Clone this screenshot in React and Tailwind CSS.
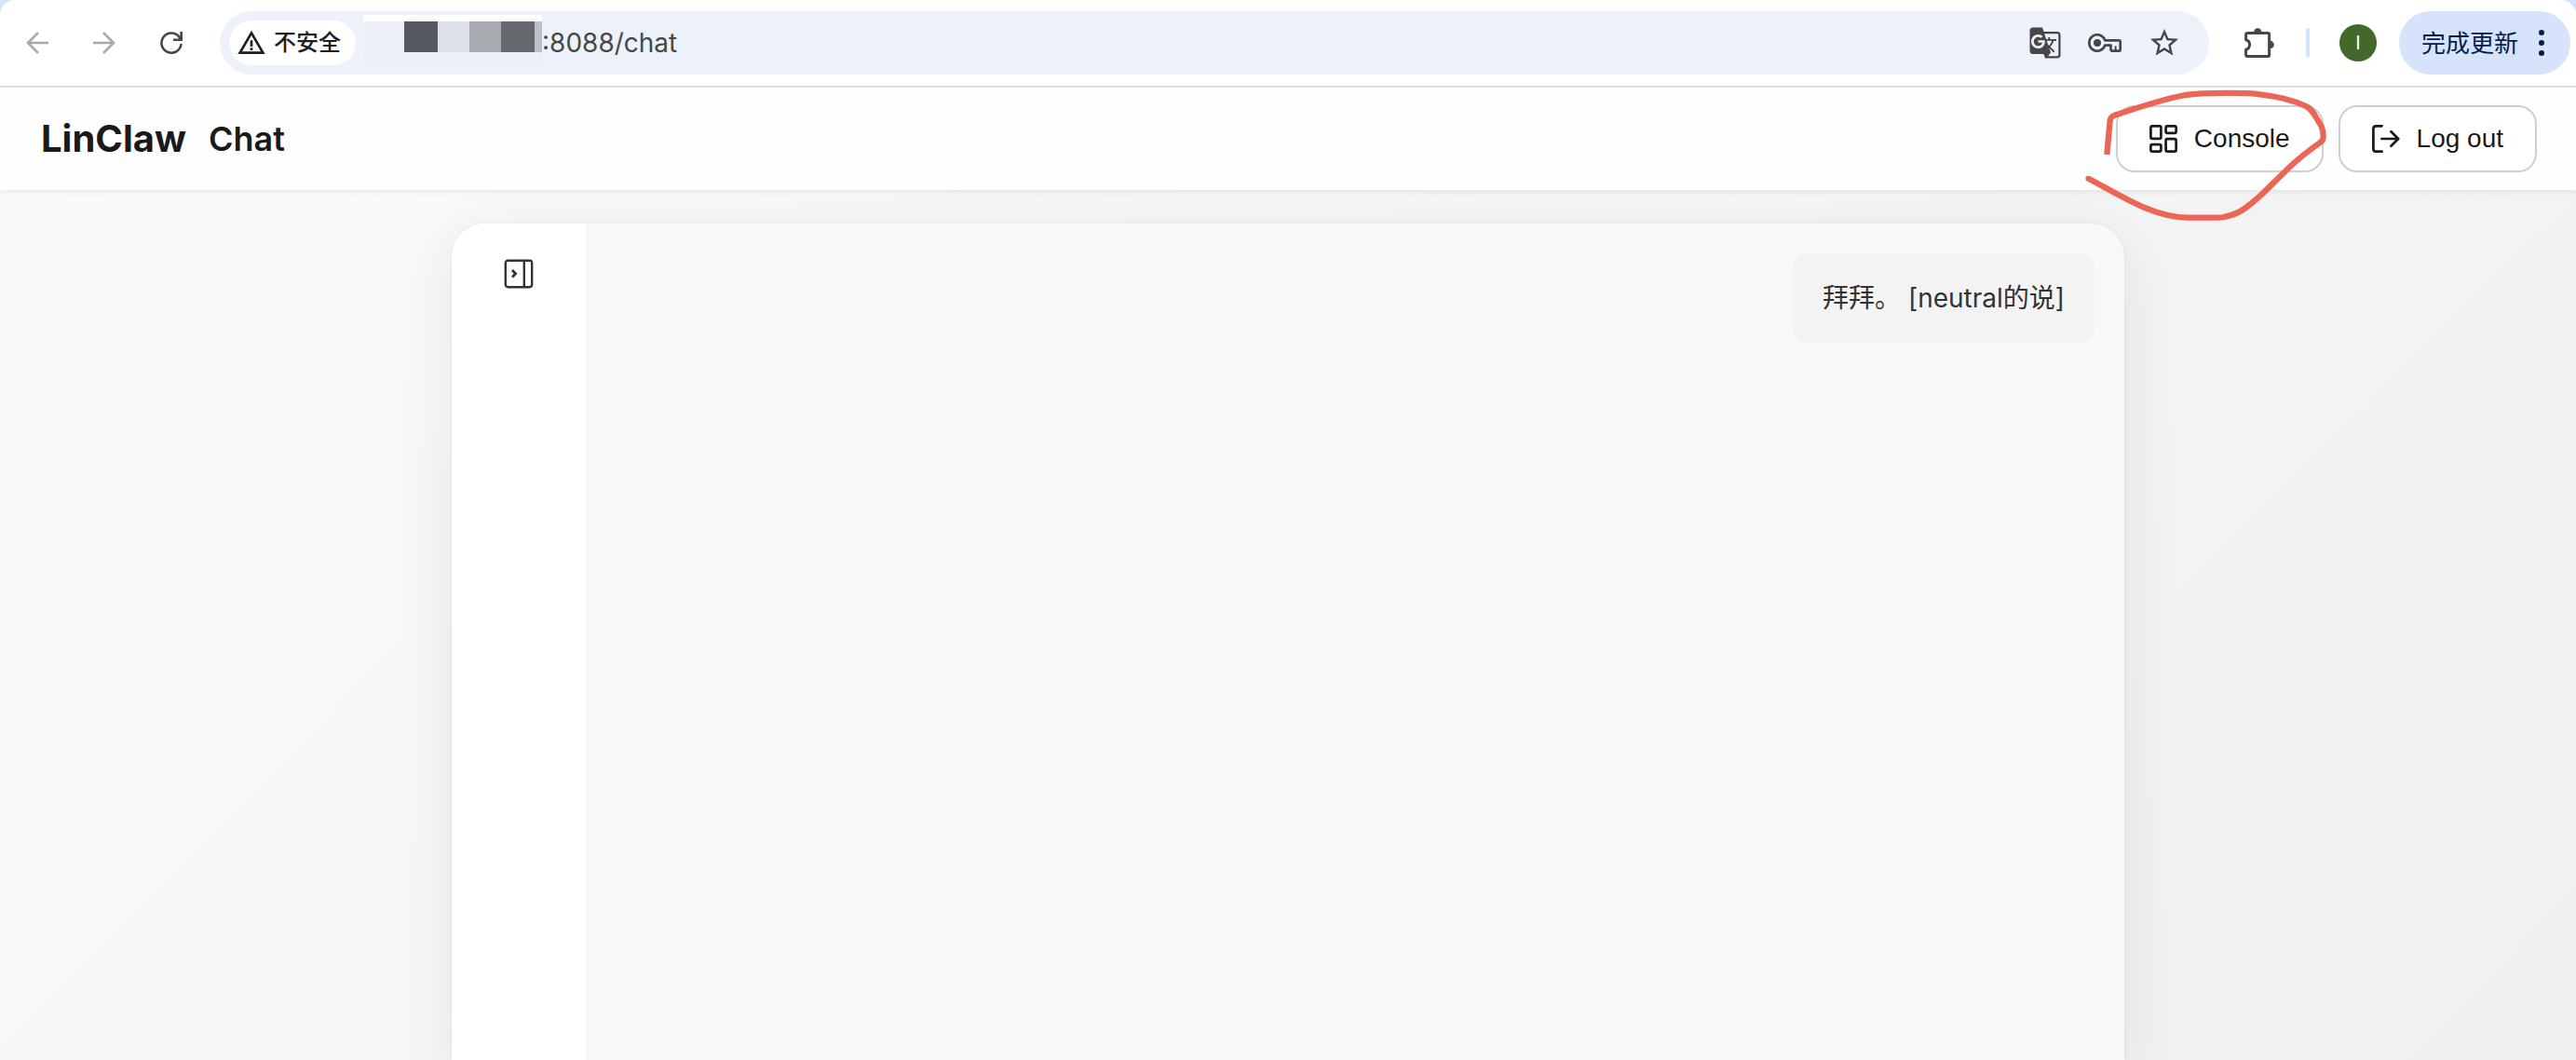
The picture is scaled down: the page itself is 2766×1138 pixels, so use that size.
import { useState } from "react";
import { MdGTranslate, MdStarBorder, MdWarningAmber } from "react-icons/md";

const BackIcon = () => (
  <svg width="24" height="24" viewBox="0 0 24 24" fill="none" stroke="currentColor" strokeWidth="2.6">
    <path d="M24 12H2M13 1L2 12L13 23" />
  </svg>
);

const ForwardIcon = () => (
  <svg width="24" height="24" viewBox="0 0 24 24" fill="none" stroke="currentColor" strokeWidth="2.6">
    <path d="M0 12H22M11 1L22 12L11 23" />
  </svg>
);

const ReloadIcon = () => (
  <svg width="24" height="24" viewBox="0 0 24 24" fill="none" stroke="currentColor" strokeWidth="2.6">
    <path d="M22.6 13A10.6 10.6 0 1 1 20.4 5.6L22 8.4" />
    <path d="M22.7 0V8.7H14" />
  </svg>
);

const KeyIcon = () => (
  <svg width="36" height="20" viewBox="0 0 36 20" fill="none" stroke="currentColor">
    <path
      d="M18.3 7.3A8.7 8.7 0 1 0 18.3 12.7H24.5V17.3Q24.5 18.7 26 18.7H33.2Q34.7 18.7 34.7 17.2V8.8Q34.7 7.3 33.2 7.3Z"
      strokeWidth="2.7"
      strokeLinejoin="round"
    />
    <path d="M29.6 13.5V18" strokeWidth="2" />
    <circle cx="10" cy="10" r="4" fill="currentColor" stroke="none" />
  </svg>
);

const PuzzleIcon = () => (
  <svg width="32" height="32" viewBox="0 0 32 32" fill="none">
    <path
      d="M3.5 5.4H25.3Q26.6 5.4 26.6 6.7V29.3Q26.6 30.6 25.3 30.6H3.5Q1.6 30.6 1.6 28.9V23.2A5.4 5.4 0 0 0 1.6 12.8V7Q1.6 5.4 3.5 5.4Z"
      stroke="currentColor"
      strokeWidth="3"
      strokeLinejoin="round"
    />
    <path d="M10 5A4.2 4.8 0 0 1 18.4 5ZM27 13.6A4.8 4.4 0 0 1 27 22.4Z" fill="currentColor" />
  </svg>
);

const DotsIcon = () => (
  <svg width="6" height="28" viewBox="0 0 6 28" fill="currentColor">
    <circle cx="3" cy="3" r="3" />
    <circle cx="3" cy="14" r="3" />
    <circle cx="3" cy="25" r="3" />
  </svg>
);

const ConsoleIcon = () => (
  <svg width="30" height="30" viewBox="0 0 30 30" fill="none" stroke="currentColor" strokeWidth="2.7">
    <rect x="1.4" y="1.4" width="11" height="13.4" rx="1.6" />
    <rect x="17.6" y="1.4" width="11" height="7.4" rx="1.6" />
    <rect x="17.6" y="15.2" width="11" height="13.4" rx="1.6" />
    <rect x="1.4" y="21.2" width="11" height="7.4" rx="1.6" />
  </svg>
);

const LogoutIcon = () => (
  <svg
    width="30"
    height="30"
    viewBox="0 0 30 30"
    fill="none"
    stroke="currentColor"
    strokeWidth="2.7"
    strokeLinecap="round"
    strokeLinejoin="round"
  >
    <path d="M10.6 1.3H4.4Q1.4 1.3 1.4 4.3V25.7Q1.4 28.7 4.4 28.7H10.6" />
    <path d="M10.4 15H28M20.4 7.2L28.2 15L20.4 22.8" />
  </svg>
);

const SidebarIcon = () => (
  <svg width="32" height="32" viewBox="0 0 32 32" fill="none" stroke="currentColor" strokeWidth="2.4">
    <rect x="1.8" y="1.8" width="28.4" height="28.4" rx="2.6" />
    <path d="M21.8 2V30" />
    <path d="M9 12L12.6 15.8L9 19.6" strokeWidth="2.8" />
  </svg>
);

// hand drawn circle around the console button
const Marker = () => (
  <svg
    className="pointer-events-none absolute -top-[23px] -left-[42px] h-[150px] w-[270px]"
    viewBox="0 0 810 450"
    fill="none"
    stroke="#eb6657"
    strokeWidth="19"
  >
    <path d="M97 228L107 118Q109 106 122 101C180 82 280 48 350 36C410 28 550 28 590 34C650 41 705 56 738 72C760 82 768 105 784 130Q794 145 794 172Q794 182 784 189C745 216 715 240 680 273L600 352C545 402 520 420 478 428Q468 431 450 431H360C250 431 150 365 38 305" />
    <circle cx="37" cy="305" r="9" fill="#eb6657" stroke="none" />
  </svg>
);

const mosaic = [
  "w-[44px] bg-[#edf1f7]",
  "w-[36px] bg-[#555860]",
  "w-[34px] bg-[#dde2ea]",
  "w-[34px] bg-[#a7aaaf]",
  "w-[36px] bg-[#65686d]",
  "w-[8px] bg-[#bcc0ca]",
];

const BrowserBar = () => {
  return (
    <div className="bg-[#d3e3fd]">
      <div className="flex h-[94px] items-center rounded-t-2xl border-b-2 border-[#e0e0e0] bg-white pr-[6px] pl-7 text-[#474747]">
        <div className="flex items-center gap-12">
          <button aria-label="Back" className="text-[#a9a9a9]">
            <BackIcon />
          </button>
          <button aria-label="Forward" className="text-[#a9a9a9]">
            <ForwardIcon />
          </button>
          <button aria-label="Reload">
            <ReloadIcon />
          </button>
        </div>

        <div className="ml-10 flex h-[68px] flex-1 items-center rounded-full bg-[#edf2fa] pr-[30px] pl-[10px]">
          <button className="flex h-12 items-center gap-2 rounded-full bg-white pr-4 pl-2 text-2xl font-medium text-[#1f1f1f]">
            <MdWarningAmber size={32} />
            不安全
          </button>
          <div className="ml-2 flex flex-1 items-center">
            <div className="h-[60px] w-[192px]">
              <div className="h-[7px] bg-white"></div>
              <div className="flex h-[33px]">
                {mosaic.map((cell) => (
                  <div key={cell} className={`shrink-0 ${cell}`}></div>
                ))}
              </div>
              <div className="h-3 bg-[#ebf0f6]"></div>
            </div>
            <input
              aria-label="Address"
              defaultValue=":8088/chat"
              className="min-w-0 flex-1 bg-transparent text-[28px] outline-none"
            />
          </div>
          <div className="flex items-center gap-7">
            <button aria-label="Translate">
              <MdGTranslate size={36} />
            </button>
            <button aria-label="Passwords">
              <KeyIcon />
            </button>
            <button aria-label="Bookmark">
              <MdStarBorder size={36} />
            </button>
          </div>
        </div>

        <button aria-label="Extensions" className="ml-[38px]">
          <PuzzleIcon />
        </button>
        <div className="ml-[34px] h-8 w-1 rounded-full bg-[#d3e3fd]"></div>
        <button className="ml-8 h-10 w-10 rounded-full bg-[#42692a] text-xl text-white">
          I
        </button>
        <button className="ml-6 flex h-[68px] items-center gap-[22px] rounded-full bg-[#d7e2fb] pr-7 pl-6 text-[26px] text-[#041e49]">
          完成更新
          <DotsIcon />
        </button>
      </div>
    </div>
  );
};

const Header = () => {
  return (
    <header className="relative z-10 flex h-[110px] items-center justify-between bg-[#fefefe] pr-[42px] pl-11 text-[#1a1a1a] shadow-[0_2px_6px_rgba(0,0,0,0.08)]">
      <div className="flex items-center gap-6">
        <span className="text-[40px] font-bold">LinClaw</span>
        <h1 className="text-[36px] font-semibold">Chat</h1>
      </div>
      <div className="flex gap-4 font-['Liberation_Sans',Arial,sans-serif] text-[28px]">
        <div className="relative">
          <button className="flex h-[72px] items-center gap-[18px] rounded-[20px] border-2 border-[#cfcfcf] bg-white px-[34px]">
            <ConsoleIcon />
            Console
          </button>
          <Marker />
        </div>
        <button className="flex h-[72px] items-center gap-[18px] rounded-[20px] border-2 border-[#cfcfcf] bg-white px-[34px]">
          <LogoutIcon />
          Log out
        </button>
      </div>
    </header>
  );
};

const ChatPanel = () => {
  const [open, setOpen] = useState(false);

  return (
    <main className="flex flex-1 bg-linear-135 from-[#fafafa] to-[#f0f0f0] pt-9">
      <div className="mx-auto flex w-[1796px] max-w-full overflow-hidden rounded-t-[36px] bg-[#f8f8f8] shadow-[0_0_4px_rgba(0,0,0,0.06),0_16px_64px_rgba(0,0,0,0.08)]">
        <aside className="flex w-36 flex-col items-center bg-white pt-[38px] text-[#333333]">
          <button
            aria-label="Toggle sidebar"
            aria-expanded={open}
            onClick={() => setOpen(!open)}
          >
            <SidebarIcon />
          </button>
        </aside>
        <section className="flex flex-1 flex-col items-end p-8">
          <p className="rounded-2xl bg-[#f3f3f3] px-8 py-6 text-[28px] leading-[48px] text-[#333333]">
            拜拜。 [neutral的说]
          </p>
        </section>
      </div>
    </main>
  );
};

const App = () => {
  return (
    <div className="flex min-h-screen flex-col overflow-hidden font-[Inter,'Noto_Sans_CJK_SC',sans-serif]">
      <BrowserBar />
      <Header />
      <ChatPanel />
    </div>
  );
};

export default App;
